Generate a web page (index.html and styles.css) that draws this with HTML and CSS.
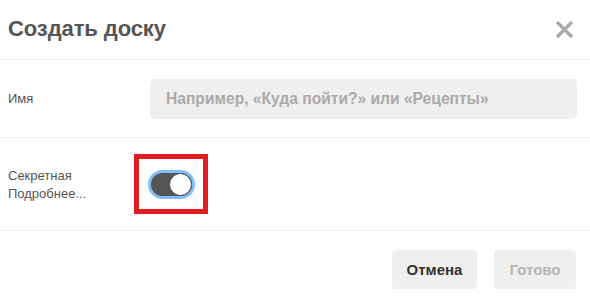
FILE: index.html
```html
<!DOCTYPE html>
<html lang="ru">
<head>
<meta charset="utf-8">
<link rel="stylesheet" href="styles.css">
</head>
<body>
<div class="dialog">
  <div class="header">
    <h1 class="title">Создать доску</h1>
    <button class="close" aria-label="Закрыть">
      <svg width="19" height="19" viewBox="0 0 19 19"><path d="M2 2L17 17M17 2L2 17" stroke="#ababab" stroke-width="3.4" stroke-linecap="butt"/></svg>
    </button>
  </div>
  <div class="row row-name">
    <label class="label name-label">Имя</label>
    <div class="input">Например, «Куда пойти?» или «Рецепты»</div>
  </div>
  <div class="row row-secret">
    <div class="label secret-label">
      <div>Секретная</div>
      <div>Подробнее...</div>
    </div>
    <div class="highlight">
      <div class="toggle"><div class="knob"></div></div>
    </div>
  </div>
  <div class="footer">
    <button class="btn btn-cancel">Отмена</button>
    <button class="btn btn-done">Готово</button>
  </div>
</div>
</body>
</html>
```
FILE: styles.css
```css
html, body {
  margin: 0;
  padding: 0;
  background: #fff;
}
body {
  font-family: "Liberation Sans", Arial, sans-serif;
  color: #555;
}
.dialog {
  width: 590px;
}
.header {
  height: 60px;
  display: flex;
  align-items: center;
  justify-content: space-between;
  padding: 0 16px 0 8px;
  border-bottom: 1px solid #efefef;
  box-sizing: border-box;
}
.title {
  margin: 0;
  font-size: 22px;
  font-weight: bold;
  letter-spacing: -0.1px;
  color: #555;
  padding-bottom: 2px;
}
.close {
  border: 0;
  background: none;
  padding: 0;
  width: 19px;
  height: 19px;
  display: flex;
}
.row {
  display: flex;
  align-items: center;
  border-bottom: 1px solid #efefef;
  padding: 0 13px 0 8px;
}
.row-name {
  height: 77px;
}
.label {
  font-size: 13px;
  color: #555;
  line-height: 18px;
}
.name-label {
  width: 142px;
  flex: none;
}
.input {
  flex: 1;
  height: 40px;
  background: #efefef;
  border-radius: 5px;
  display: flex;
  align-items: center;
  padding-left: 16px;
  font-size: 15.6px;
  font-weight: bold;
  color: #aaa;
}
.row-secret {
  height: 92px;
}
.secret-label {
  width: 126px;
  flex: none;
  padding-top: 2px;
}
.highlight {
  width: 64px;
  height: 50px;
  border: 5px solid #e31b23;
  display: flex;
  align-items: center;
  justify-content: center;
}
.toggle {
  width: 41px;
  height: 23px;
  border: 3px solid #82bdf8;
  border-radius: 15px;
  background: #555;
  position: relative;
}
.knob {
  position: absolute;
  right: 0;
  top: 0;
  width: 21px;
  height: 21px;
  border-radius: 50%;
  background: #fff;
  border: 1px solid #444;
}
.footer {
  display: flex;
  justify-content: flex-end;
  gap: 17px;
  padding: 19px 14px 0 0;
}
.btn {
  height: 39px;
  border: 0;
  border-radius: 4px;
  background: #efefef;
  font-family: "Liberation Sans", Arial, sans-serif;
  font-size: 15px;
  font-weight: bold;
  padding: 0 14px;
}
.btn-cancel {
  color: #333;
  width: 85px;
}
.btn-done {
  color: #b5b5b5;
  width: 82px;
}
```
